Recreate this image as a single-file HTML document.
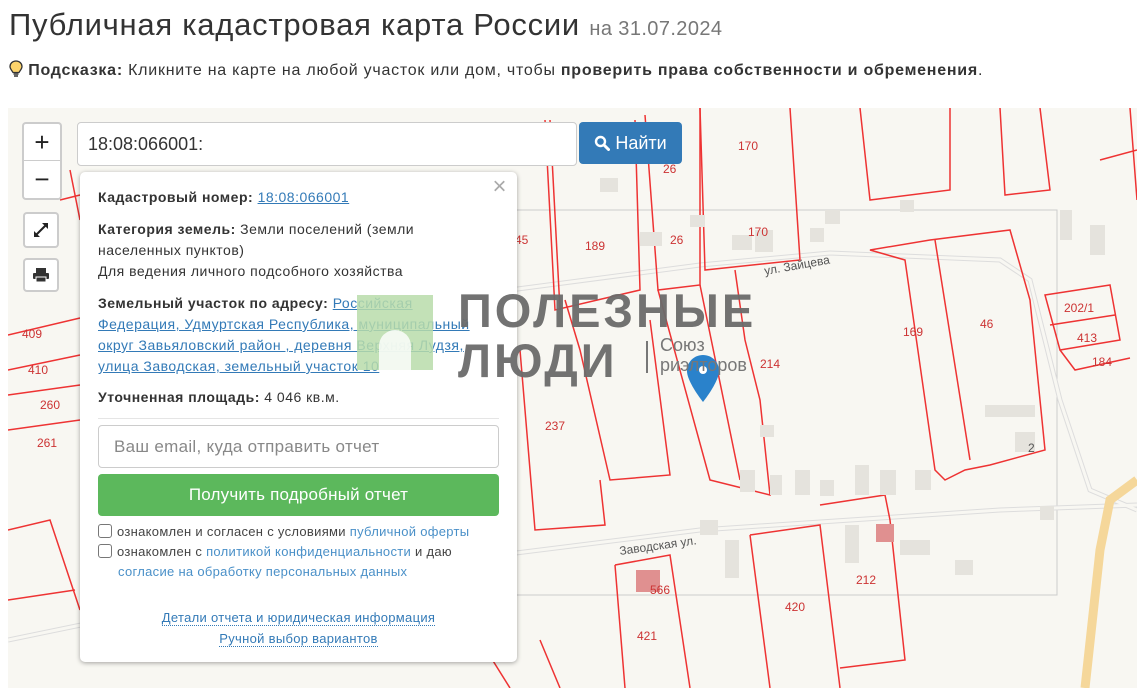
<!DOCTYPE html>
<html><head><meta charset="utf-8"><style>
*{box-sizing:border-box;margin:0;padding:0}
body{width:1137px;height:688px;overflow:hidden;background:#fff;font-family:"Liberation Sans",Arial,sans-serif;color:#333;position:relative}
h1{position:absolute;left:9px;top:7px;font-weight:normal;font-size:31px;letter-spacing:0.75px;color:#333;white-space:nowrap}
h1 small{font-size:20px;color:#777;letter-spacing:0.4px}
.hint{position:absolute;left:9px;top:60px;font-size:16px;letter-spacing:0.75px;white-space:nowrap}
#map{position:absolute;left:8px;top:108px;width:1129px;height:580px;background:#f8f7f2;overflow:hidden}
.ctl{position:absolute;background:#fff;border:2px solid rgba(0,0,0,.2);border-radius:4px;text-align:center;color:#222}
.panel{position:absolute;left:80px;top:172px;width:437px;height:490px;background:#fff;border-radius:5px;box-shadow:0 1px 5px rgba(0,0,0,.35);font-size:14px;line-height:21px;padding:15px 18px;letter-spacing:0.5px;white-space:nowrap}
a{color:#337ab7}
.u{text-decoration:underline}
.cb{display:inline-block;width:14px;height:14px;border:1px solid #777;border-radius:3px;vertical-align:-2px;margin-right:5px;background:#fff}
.lk{color:#4a90c8;text-decoration:none}
.dl{color:#337ab7;text-decoration:none;border-bottom:1px dotted #337ab7}
</style></head><body>
<h1>Публичная кадастровая карта России <small>на 31.07.2024</small></h1>
<div class="hint"><svg width="14" height="18" viewBox="0 0 14 18" style="vertical-align:-3px"><path d="M7 1C3.5 1 1 3.5 1 6.5C1 9 3 10.5 4 12.5H10C11 10.5 13 9 13 6.5C13 3.5 10.5 1 7 1Z" fill="#fcd36b" stroke="#333" stroke-width="1.3"/><path d="M4.5 14H9.5M5 16H9" stroke="#333" stroke-width="1.5"/></svg> <b>Подсказка:</b> Кликните на карте на любой участок или дом, чтобы <b>проверить права собственности и обременения</b>.</div>
<div id="map">
<svg width="1129" height="580" viewBox="8 108 1129 580" style="position:absolute;left:0;top:0" fill="none" stroke="#e33" stroke-width="1.5">
<rect x="516" y="210" width="541" height="385" stroke="#ccc" stroke-width="1"/>
<g stroke="#ddd" stroke-width="5">
<path d="M8 640 L300 580 L700 530 L1000 510 L1137 505"/>
<path d="M510 290 L700 265 L830 253 L1000 260 L1030 280 L1060 400 L1090 490 L1137 510"/>
</g>
<g stroke="#f8f7f2" stroke-width="3">
<path d="M8 640 L300 580 L700 530 L1000 510 L1137 505"/>
<path d="M510 290 L700 265 L830 253 L1000 260 L1030 280 L1060 400 L1090 490 L1137 510"/>
</g>
<path d="M1137 480 L1110 500 L1100 550 L1085 688" stroke="#f5d79a" stroke-width="9"/>
<path d="M545 120 L555 310 L640 290 L635 120"/>
<path d="M550 120 L560 310"/>
<path d="M645 115 L658 290 L700 285 L700 108"/>
<path d="M700 108 L705 270 L800 260 L790 108"/>
<path d="M860 108 L870 200 L950 190 L950 108"/>
<path d="M1000 108 L1005 195 L1050 190 L1040 108"/>
<path d="M870 250 L930 240 L1010 230 L1030 300 L1045 450 L990 465 L965 470 L945 480 L935 470 L905 260 Z"/>
<path d="M935 240 L970 460"/>
<path d="M658 290 L710 480 L750 490 L770 495 L760 400 L745 340 L735 270"/>
<path d="M700 285 L740 480"/>
<path d="M565 300 L580 350 L610 480 L670 475 L650 320"/>
<path d="M520 350 L535 530 L605 525 L600 480"/>
<path d="M615 565 L625 688"/>
<path d="M615 565 L670 555 L690 688"/>
<path d="M750 535 L770 688 M750 535 L820 525 L840 688"/>
<path d="M820 505 L885 495 L890 520 L905 660 L840 668"/>
<path d="M1045 295 L1110 285 L1120 340 L1060 350 Z M1050 325 L1115 315 M1060 350 L1075 370 L1130 358"/>
<path d="M1100 160 L1137 150 M1130 108 L1137 200"/>
<path d="M8 335 L80 318 M8 370 L80 355 M8 395 L80 385 M8 430 L80 420"/>
<path d="M8 530 L50 520 L80 610 M8 600 L75 590"/>
<path d="M60 200 L80 195 M70 170 L80 220"/>
<path d="M480 640 L510 688 M540 640 L560 688"/>
<g fill="#e5e3dd" stroke="none">
<rect x="600" y="178" width="18" height="14"/><rect x="640" y="232" width="22" height="14"/><rect x="690" y="215" width="15" height="12"/>
<rect x="732" y="235" width="20" height="15"/><rect x="755" y="230" width="18" height="22"/><rect x="810" y="228" width="14" height="14"/>
<rect x="825" y="210" width="15" height="14"/><rect x="900" y="200" width="14" height="12"/><rect x="1060" y="210" width="12" height="30"/>
<rect x="1090" y="225" width="15" height="30"/><rect x="985" y="405" width="50" height="12"/><rect x="1015" y="432" width="20" height="20"/>
<rect x="740" y="470" width="15" height="22"/><rect x="770" y="475" width="12" height="20"/><rect x="795" y="470" width="15" height="25"/>
<rect x="820" y="480" width="14" height="16"/><rect x="855" y="465" width="14" height="30"/><rect x="880" y="470" width="16" height="25"/>
<rect x="915" y="470" width="16" height="20"/><rect x="1040" y="506" width="14" height="14"/><rect x="760" y="425" width="14" height="12"/>
<rect x="845" y="525" width="14" height="38"/><rect x="900" y="540" width="30" height="15"/><rect x="955" y="560" width="18" height="15"/>
<rect x="725" y="540" width="14" height="38"/><rect x="700" y="520" width="18" height="15"/>
</g>
<rect x="636" y="570" width="24" height="22" fill="#e09090" stroke="none"/>
<rect x="876" y="524" width="18" height="18" fill="#e09090" stroke="none"/>
<g fill="#c33" stroke="none" font-family="Liberation Sans" font-size="12">
<text x="738" y="150">170</text><text x="663" y="173">26</text><text x="748" y="236">170</text><text x="670" y="244">26</text>
<text x="585" y="250">189</text><text x="515" y="244">45</text><text x="903" y="336">169</text><text x="980" y="328">46</text>
<text x="760" y="368">214</text><text x="545" y="430">237</text><text x="1064" y="312">202/1</text><text x="1077" y="342">413</text>
<text x="1092" y="366">184</text><text x="650" y="594">566</text><text x="785" y="611">420</text><text x="856" y="584">212</text>
<text x="637" y="640">421</text><text x="22" y="338">409</text><text x="28" y="374">410</text><text x="40" y="409">260</text><text x="37" y="447">261</text>
</g>
<g fill="#555" stroke="none" font-family="Liberation Sans" font-size="12">
<text x="765" y="275" transform="rotate(-10 765 275)">ул. Зайцева</text>
<text x="620" y="555" transform="rotate(-8 620 555)">Заводская ул.</text>
<text x="1028" y="452">2</text>
</g>
</svg>
<svg style="position:absolute;left:678px;top:246px" width="34" height="50" viewBox="0 0 34 50"><path d="M17 1C8 1 1 8 1 17C1 28 17 48 17 48S33 28 33 17C33 8 26 1 17 1Z" fill="#2a82cb"/><circle cx="17" cy="16" r="4" fill="#fff"/></svg>
</div>
<div class="ctl" style="left:22px;top:122px;width:40px;height:78px"><div style="height:37px;font-size:26px;line-height:36px;border-bottom:1px solid #ccc">+</div><div style="font-size:26px;line-height:36px">−</div></div>
<div class="ctl" style="left:23px;top:212px;width:36px;height:36px"><svg width="20" height="20" viewBox="0 0 20 20" style="margin-top:6px"><path d="M4 16L16 4" stroke="#222" stroke-width="2"/><path d="M11 3H17V9Z M3 11V17H9Z" fill="#222"/></svg></div>
<div class="ctl" style="left:23px;top:258px;width:36px;height:34px"><svg width="18" height="16" viewBox="0 0 18 16" style="margin-top:7px"><rect x="4" y="1" width="10" height="5" fill="#333"/><rect x="1" y="6" width="16" height="6" rx="1" fill="#333"/><rect x="4" y="10" width="10" height="5" fill="#333" stroke="#fff"/></svg></div>
<div style="position:absolute;left:77px;top:122px;width:500px;height:44px;background:#fff;border:1px solid #ccc;border-radius:4px;font-size:18px;padding:11px 10px;color:#333">18:08:066001:</div>
<div style="position:absolute;left:579px;top:122px;width:103px;height:42px;background:#337ab7;border-radius:4px;color:#fff;font-size:18px;line-height:42px;text-align:center"><svg width="16" height="16" viewBox="0 0 16 16" style="vertical-align:-2px"><circle cx="6.5" cy="6.5" r="4.5" fill="none" stroke="#fff" stroke-width="2.4"/><path d="M10 10L14.5 14.5" stroke="#fff" stroke-width="3" stroke-linecap="round"/></svg> Найти</div>
<div class="panel">
<div style="position:absolute;right:10px;top:4px;font-size:24px;color:#aaa">×</div>
<div><b>Кадастровый номер:</b> <a class="u" href="#">18:08:066001</a></div>
<div style="margin-top:11px"><b>Категория земель:</b> Земли поселений (земли<br>населенных пунктов)<br>Для ведения личного подсобного хозяйства</div>
<div style="margin-top:11px"><b>Земельный участок по адресу:</b> <a class="u" href="#">Российская<br>Федерация, Удмуртская Республика, муниципальный<br>округ Завьяловский район , деревня Верхняя Лудзя,<br>улица Заводская, земельный участок 10</a></div>
<div style="margin-top:10px"><b>Уточненная площадь:</b> 4 046 кв.м.</div>
<div style="border-top:1px solid #e5e5e5;margin-top:10px"></div>
<div style="margin-top:6px;height:43px;border:1px solid #ccc;border-radius:4px;font-size:17px;color:#888;padding:10px 15px;letter-spacing:0.3px">Ваш email, куда отправить отчет</div>
<div style="margin-top:6px;height:42px;background:#5cb85c;border-radius:4px;color:#fff;font-size:17px;text-align:center;line-height:42px;letter-spacing:0.2px">Получить подробный отчет</div>
<div style="margin-top:6px;font-size:13px;line-height:20px;color:#444;letter-spacing:0.3px"><span class="cb"></span>ознакомлен и согласен с условиями <span class="lk">публичной оферты</span></div>
<div style="font-size:13px;line-height:20px;color:#444;letter-spacing:0.3px"><span class="cb"></span>ознакомлен с <span class="lk">политикой конфиденциальности</span> и даю<br><span style="padding-left:20px" class="lk">согласие на обработку персональных данных</span></div>
<div style="margin-top:25px;text-align:center;font-size:13px;line-height:21px;letter-spacing:0.3px"><span class="dl">Детали отчета и юридическая информация</span><br><span class="dl">Ручной выбор вариантов</span></div>
</div>
<div style="position:absolute;left:357px;top:295px;width:76px;height:75px;background:#b9dcaa;opacity:.85"></div>
<div style="position:absolute;left:379px;top:330px;width:32px;height:40px;background:#fff;opacity:.8;border-radius:16px 16px 0 0"></div>
<div style="position:absolute;left:458px;top:286px;font-size:47px;font-weight:bold;color:#6b6b6b;letter-spacing:3px;line-height:50px;opacity:.95">ПОЛЕЗНЫЕ<br>ЛЮДИ</div>
<div style="position:absolute;left:646px;top:341px;height:32px;border-left:2px solid #777"></div>
<div style="position:absolute;left:660px;top:335px;font-size:18px;color:#777;line-height:20px">Союз<br>риэлторов</div>
</body></html>
